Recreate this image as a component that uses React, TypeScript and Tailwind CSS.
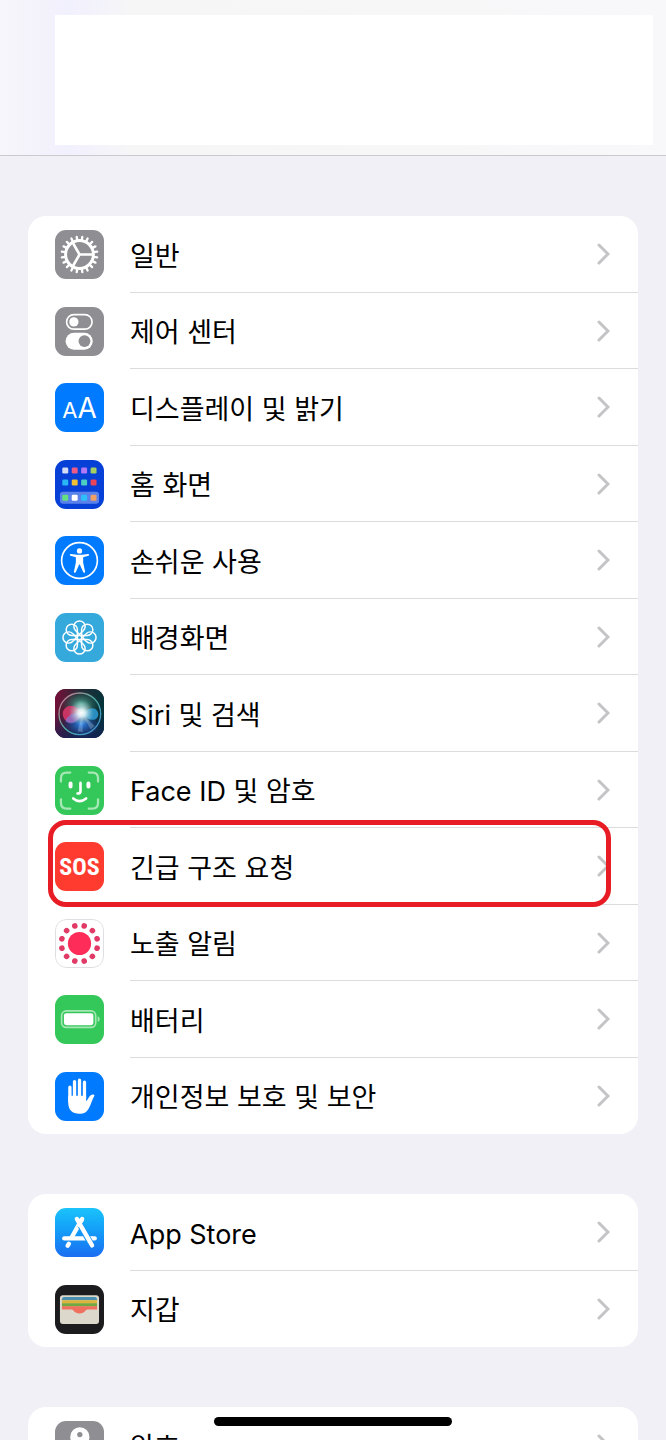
import type { ReactNode } from "react";

const range = (n: number) => Array.from({ length: n }, (_, i) => i);

function Tile({ className, children }: { className: string; children?: ReactNode }) {
  return (
    <span
      aria-hidden="true"
      className={`flex size-[49px] shrink-0 items-center justify-center overflow-hidden rounded-[11px] ${className}`}
    >
      {children}
    </span>
  );
}

function Art({ children }: { children: ReactNode }) {
  return (
    <svg viewBox="0 0 148 148" className="size-full" fill="none">
      {children}
    </svg>
  );
}

function GearIcon() {
  return (
    <Tile className="bg-[#8e8e93]">
      <Art>
        <g transform="translate(74 74)" stroke="#fff">
          <circle r="42" strokeWidth="9" />
          {range(20).map((i) => (
            <path key={i} d="M0 -44V-54" strokeWidth="7" strokeLinecap="round" transform={`rotate(${i * 18 + 9})`} />
          ))}
          <path d="M0 0H40M0 0L-20 -35M0 0L-20 35" strokeWidth="8" />
        </g>
      </Art>
    </Tile>
  );
}

function ControlCenterIcon() {
  return (
    <Tile className="bg-[#8e8e93]">
      <Art>
        <rect x="35" y="23" width="77" height="44" rx="22" stroke="#fff" strokeWidth="5" />
        <circle cx="57" cy="45" r="14" fill="#fff" />
        <rect x="32" y="78" width="82" height="51" rx="25.5" fill="#fff" />
        <circle cx="89" cy="103" r="18" fill="#8e8e93" />
      </Art>
    </Tile>
  );
}

function DisplayIcon() {
  return (
    <Tile className="bg-[#007aff]">
      <span className="flex items-baseline font-['Inter',sans-serif] leading-none text-white">
        <span className="text-[22px]">A</span>
        <span className="text-[28px]">A</span>
      </span>
    </Tile>
  );
}

const homeCells = [
  [32, ["#d5dcf5", "#ee5a86", "#b279f5", "#a6cf62"]],
  [68, ["#29b5f6", "#efc035", "#4ccfc0", "#e8455a"]],
  [114, ["#65e07f", "#ffffff", "#2cc0fa", "#f0a064"]],
] as const;

function HomeIcon() {
  return (
    <Tile className="bg-[#0640d6]">
      <Art>
        <rect x="15" y="96" width="118" height="36" rx="9" fill="#5b82ea" />
        {homeCells.map(([y, colors]) =>
          colors.map((c, i) => (
            <rect key={`${y}-${i}`} x={22 + i * 28.5} y={y - 9} width="18" height="18" rx="4" fill={c} />
          )),
        )}
      </Art>
    </Tile>
  );
}

function AccessibilityIcon() {
  return (
    <Tile className="bg-[#007aff]">
      <Art>
        <circle cx="74" cy="74" r="54" stroke="#fff" strokeWidth="5" />
        <circle cx="74" cy="45" r="8" fill="#fff" />
        <path
          d="M48 54L66 57H82L100 54C104 54 104 59 101 60L85 64V80L91 108C91 112 86 112 85 109L75 86H73L63 109C62 112 57 112 57 108L63 80V64L47 60C44 59 44 54 48 54Z"
          fill="#fff"
        />
      </Art>
    </Tile>
  );
}

function WallpaperIcon() {
  return (
    <Tile className="bg-[#35a8dc]">
      <Art>
        <g transform="translate(74 74)" stroke="#fff" strokeWidth="4.5">
          <circle r="7" />
          {range(8).map((i) => (
            <path
              key={i}
              d="M0 -9L-12 -21C-16 -25 -17 -29 -17 -33A17 17 0 0 1 17 -33C17 -29 16 -25 12 -21Z"
              transform={`rotate(${i * 45})`}
            />
          ))}
        </g>
      </Art>
    </Tile>
  );
}

function SiriIcon() {
  return (
    <Tile className="bg-[#1a1226]">
      <Art>
        <defs>
          <linearGradient id="siri-bg" x1="0" y1="0" x2="1" y2="0.15">
            <stop offset="0" stopColor="#7d0c38" />
            <stop offset="0.5" stopColor="#262b36" />
            <stop offset="1" stopColor="#05343a" />
          </linearGradient>
          <linearGradient id="siri-low" x1="0" y1="0" x2="0" y2="1">
            <stop offset="0.5" stopColor="#14205a" stopOpacity="0" />
            <stop offset="1" stopColor="#141d5c" stopOpacity="0.7" />
          </linearGradient>
          <linearGradient id="siri-ring" x1="0" y1="0" x2="1" y2="1">
            <stop offset="0" stopColor="#e0708c" />
            <stop offset="0.5" stopColor="#4bb0a4" />
            <stop offset="1" stopColor="#4088dc" />
          </linearGradient>
          <radialGradient id="siri-glow">
            <stop offset="0" stopColor="#fff" />
            <stop offset="0.3" stopColor="#e6f8fb" stopOpacity="0.9" />
            <stop offset="1" stopColor="#8fc6cc" stopOpacity="0" />
          </radialGradient>
          <radialGradient id="siri-green">
            <stop offset="0" stopColor="#5cb09c" />
            <stop offset="1" stopColor="#1b6a58" stopOpacity="0" />
          </radialGradient>
          <radialGradient id="siri-blue">
            <stop offset="0" stopColor="#2f86f0" />
            <stop offset="1" stopColor="#1a4aa8" stopOpacity="0" />
          </radialGradient>
        </defs>
        <rect width="148" height="148" fill="url(#siri-bg)" />
        <rect width="148" height="148" fill="url(#siri-low)" />
        <ellipse cx="78" cy="46" rx="58" ry="40" fill="url(#siri-green)" />
        <ellipse cx="80" cy="106" rx="56" ry="40" fill="url(#siri-blue)" />
        <path d="M82 77C70 46 34 42 24 68C18 98 54 120 82 77Z" fill="#e0386c" opacity="0.85" />
        <path d="M42 82C54 68 70 74 82 77C70 98 54 112 32 98C32 92 36 86 42 82Z" fill="#7c7fe0" opacity="0.65" />
        <path d="M82 77C98 54 126 50 131 74C131 98 104 100 82 77Z" fill="#2fa4e0" opacity="0.8" />
        <path d="M82 77L120 112L108 122ZM82 77L68 128L84 130Z" fill="#d9f4ff" opacity="0.25" />
        <circle cx="80" cy="72" r="38" fill="url(#siri-glow)" />
        <circle cx="75" cy="75" r="63" stroke="url(#siri-ring)" strokeWidth="4" />
      </Art>
    </Tile>
  );
}

function FaceIdIcon() {
  return (
    <Tile className="bg-[#34c759]">
      <Art>
        <path
          d="M18 47V37Q18 20 35 20H46M102 20H113Q130 20 130 37V47M130 101V112Q130 129 113 129H102M46 129H35Q18 129 18 112V101"
          stroke="#a6e8b5"
          strokeWidth="7"
          strokeLinecap="round"
        />
        <path d="M47 53V62M101 53V62" stroke="#fff" strokeWidth="12" strokeLinecap="round" />
        <path d="M77 51V76Q77 83 68 83M55 98Q74 114 94 98" stroke="#fff" strokeWidth="8" strokeLinecap="round" />
      </Art>
    </Tile>
  );
}

function SosIcon() {
  return (
    <Tile className="bg-[#ff3b30]">
      <span className="font-['Liberation_Sans_Narrow','Roboto_Condensed','DejaVu_Sans_Condensed',sans-serif] text-[24px] leading-none font-bold text-white">
        SOS
      </span>
    </Tile>
  );
}

function ExposureIcon() {
  return (
    <Tile className="bg-white">
      <Art>
        <rect x="1.5" y="1.5" width="145" height="145" rx="32" stroke="#dfdfe3" strokeWidth="3" />
        <g transform="translate(74 74)">
          <circle r="35" fill="#fd2c58" />
          {range(12).map((i) => (
            <circle key={i} cy="-55" r="8.5" fill="#e13a66" transform={`rotate(${i * 30 + 15})`} />
          ))}
        </g>
      </Art>
    </Tile>
  );
}

function BatteryIcon() {
  return (
    <Tile className="bg-[#34c759]">
      <Art>
        <rect x="20" y="48" width="103" height="50" rx="14" stroke="#a6e8b5" strokeWidth="5" />
        <rect x="27" y="55" width="89" height="36" rx="7" fill="#fff" />
        <path d="M129 64C137 67 137 78 129 81Z" fill="#a6e8b5" />
      </Art>
    </Tile>
  );
}

function HandIcon() {
  return (
    <Tile className="bg-[#007aff]">
      <Art>
        <path d="M45 46V90M59 29V76M74 25V76M89 31V80" stroke="#fff" strokeWidth="10" strokeLinecap="round" />
        <path
          d="M40 72H94V88C99 84 102 74 108 70C113 66 121 68 119 72C113 82 109 98 102 110C95 122 87 126 73 126C53 126 40 115 40 92Z"
          fill="#fff"
        />
      </Art>
    </Tile>
  );
}

function AppStoreIcon() {
  return (
    <Tile className="bg-linear-to-b from-[#1cc3fb] to-[#1d6df1]">
      <Art>
        <g stroke="#fff" strokeWidth="13" strokeLinecap="round">
          <path d="M28 92H120" />
          <path d="M82 33L49 91" strokeLinecap="butt" />
          <path d="M42 108L38 114" />
        </g>
        <path d="M74 47L98 90L106 104" stroke="#1b98f7" strokeWidth="19" />
        <path d="M82 33L72 51" stroke="#fff" strokeWidth="13" strokeLinecap="round" />
        <path d="M66 33L112 113" stroke="#fff" strokeWidth="13" strokeLinecap="round" />
      </Art>
    </Tile>
  );
}

function WalletIcon() {
  return (
    <Tile className="bg-[#1c1c1e]">
      <Art>
        <rect x="15" y="31" width="118" height="87" rx="9" fill="#dcd8cc" />
        <path d="M21 46V43Q21 36 28 36H120Q127 36 127 43V46Z" fill="#4a8fae" />
        <path d="M21 46H127V56H21Z" fill="#dfb43a" />
        <path d="M21 55H127V65H21Z" fill="#71a83f" />
        <path d="M21 64H127V74H98C91 74 91 86 74 86C57 86 57 74 50 74H21Z" fill="#f0705f" />
      </Art>
    </Tile>
  );
}

function PasswordsIcon() {
  return (
    <Tile className="bg-[#8e8e93]">
      <Art>
        <path d="M66 70H84V122L75 131L66 122Z" fill="#fff" />
        <circle cx="75" cy="48" r="29" fill="#fff" />
        <circle cx="75" cy="41" r="8" fill="#8e8e93" />
      </Art>
    </Tile>
  );
}

type Item = { label: string; icon: ReactNode; highlighted?: boolean };

const groups: Item[][] = [
  [
    { label: "일반", icon: <GearIcon /> },
    { label: "제어 센터", icon: <ControlCenterIcon /> },
    { label: "디스플레이 및 밝기", icon: <DisplayIcon /> },
    { label: "홈 화면", icon: <HomeIcon /> },
    { label: "손쉬운 사용", icon: <AccessibilityIcon /> },
    { label: "배경화면", icon: <WallpaperIcon /> },
    { label: "Siri 및 검색", icon: <SiriIcon /> },
    { label: "Face ID 및 암호", icon: <FaceIdIcon /> },
    { label: "긴급 구조 요청", icon: <SosIcon />, highlighted: true },
    { label: "노출 알림", icon: <ExposureIcon /> },
    { label: "배터리", icon: <BatteryIcon /> },
    { label: "개인정보 보호 및 보안", icon: <HandIcon /> },
  ],
  [
    { label: "App Store", icon: <AppStoreIcon /> },
    { label: "지갑", icon: <WalletIcon /> },
  ],
  [{ label: "암호", icon: <PasswordsIcon /> }],
];

function Row({ item }: { item: Item }) {
  return (
    <li className="group relative odd:h-[77px] even:h-[76px]">
      <a href="#" className="flex h-full items-center gap-[26px] pl-[27px]">
        {item.icon}
        <span className="flex h-full flex-1 items-center justify-between border-b border-[#dcdcde] pr-7 group-last:border-transparent">
          <span className="pt-[5px]">{item.label}</span>
          <svg viewBox="0 0 13 22" className="h-[22px] w-[13px]" fill="none" aria-hidden="true">
            <path d="M2 2L11 11L2 20" stroke="#c4c4c7" strokeWidth="3" strokeLinecap="round" strokeLinejoin="miter" />
          </svg>
        </span>
      </a>
      {item.highlighted && (
        <span className="pointer-events-none absolute -top-2 right-[27px] -bottom-[2px] left-5 z-10 rounded-[18px] border-5 border-[#e81c24]" />
      )}
    </li>
  );
}

export default function App() {
  return (
    <div className="relative flex h-screen flex-col overflow-hidden bg-[#f1f0f6] font-['Inter','Noto_Sans_CJK_KR',sans-serif] text-[27px] leading-9 text-black">
      <header className="shrink-0 border-b border-[#cbcbcf] bg-linear-to-r from-[#f7f6fb] via-[#f6f6f6] via-25% to-[#f8f8fa]">
        <div className="bg-linear-to-r from-transparent via-[#f1f0fd] via-10% to-transparent to-20% pt-[15px] pr-[13px] pb-[10px] pl-[55px]">
          <div className="h-[130px] bg-white" />
        </div>
      </header>
      <main className="flex flex-col gap-[60px] px-7 pt-[60px]">
        {groups.map((items, i) => (
          <ul key={i} className="rounded-[18px] bg-white">
            {items.map((item) => (
              <Row key={item.label} item={item} />
            ))}
          </ul>
        ))}
      </main>
      <div className="absolute bottom-[14px] left-1/2 z-20 h-[9px] w-[238px] -translate-x-1/2 rounded-full bg-black" />
    </div>
  );
}
